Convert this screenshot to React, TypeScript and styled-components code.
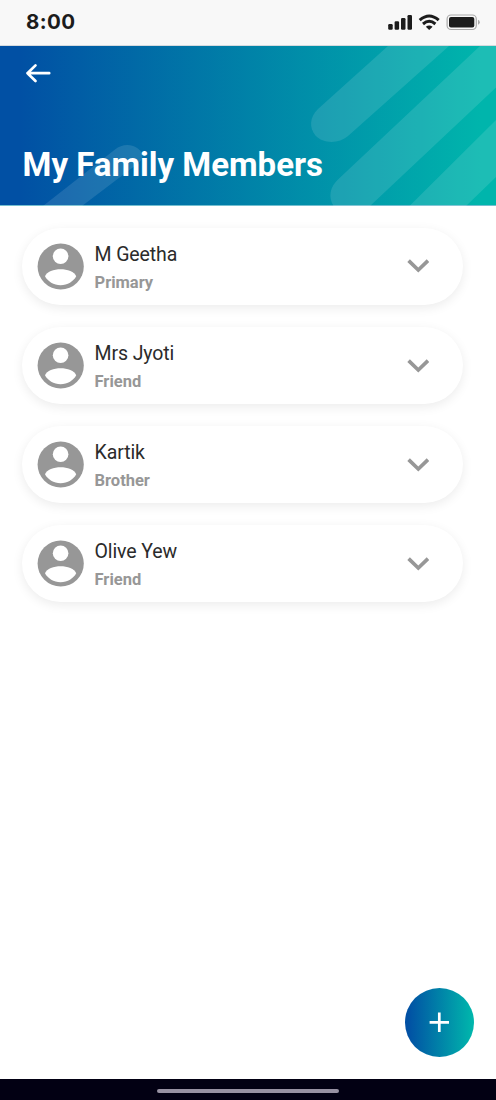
import React from "react";
import styled, { createGlobalStyle } from "styled-components";

const GlobalStyle = createGlobalStyle`
  * { box-sizing: border-box; }
  html, body { margin: 0; padding: 0; background: #fff; }
`;

const brandGradient = "linear-gradient(90deg, #0150a4 0%, #0150a4 4%, #00b5ac 97%, #00b5ac 100%)";

const Screen = styled.div`
  width: 496px;
  height: 1100px;
  display: flex;
  flex-direction: column;
  background: #fff;
  font-family: Roboto, sans-serif;
  overflow: hidden;
`;

const StatusBar = styled.div`
  height: 46px;
  flex: none;
  display: flex;
  align-items: center;
  justify-content: space-between;
  padding: 0 15px 2px 26px;
  background: #f8f8f8;
  border-bottom: 1px solid #d5dade;
`;

const Time = styled.span`
  font: 650 20.5px/24px Inter, sans-serif;
  letter-spacing: 0.45px;
  color: #1c1c1c;
`;

const StatusIcons = styled.svg`
  display: block;
  width: 94px;
  height: 18px;
`;

const Header = styled.header`
  position: relative;
  flex: none;
  height: 160px;
  display: flex;
  flex-direction: column;
  justify-content: space-between;
  padding: 17px 22px 20.5px 22.5px;
  background: ${brandGradient};
  border-bottom: 1px solid #74bfd0;
`;

const Stripes = styled.svg`
  position: absolute;
  inset: 0;
`;

const BackButton = styled.button`
  position: relative;
  width: 32px;
  height: 22px;
  padding: 0 0 0 2.500px;
  border: 0;
  background: none;
  svg { display: block; }
`;

const Title = styled.h1`
  position: relative;
  margin: 0;
  font-size: 33px;
  line-height: 40px;
  font-weight: 700;
  color: #fff;
  white-space: nowrap;
`;

const List = styled.main`
  flex: 1;
  display: flex;
  flex-direction: column;
  gap: 22.2px;
  padding: 21.9px 33px 0 22px;
`;

const Card = styled.article`
  height: 77px;
  flex: none;
  display: flex;
  align-items: center;
  padding: 0 34px 0 15px;
  border-radius: 39px;
  background: #fff;
  box-shadow: 0 3px 11px rgba(0, 0, 0, 0.08);
`;

const Details = styled.div`
  flex: 1;
  padding: 4px 0 0 10.5px;
`;

const Name = styled.div`
  font-size: 19.5px;
  line-height: 26px;
  letter-spacing: -0.1px;
  color: #2b2b2b;
`;

const Relation = styled.div`
  margin-top: 3px;
  font-size: 16.5px;
  line-height: 24px;
  font-weight: 700;
  color: #979797;
`;

const ActionRow = styled.div`
  display: flex;
  justify-content: flex-end;
  padding: 0 22px 22px 0;
`;

const AddButton = styled.button`
  width: 69px;
  height: 69px;
  display: grid;
  place-items: center;
  padding: 0;
  border: 0;
  border-radius: 50%;
  background: ${brandGradient};
`;

const HomeBar = styled.footer`
  height: 21px;
  flex: none;
  display: flex;
  justify-content: center;
  align-items: center;
  padding-top: 2px;
  background: #020013;
`;

const HomeIndicator = styled.div`
  width: 182px;
  height: 4px;
  border-radius: 2px;
  background: #9791a2;
`;

const Avatar = () => (
  <svg width="47" height="47" viewBox="0 0 47 47">
    <circle cx="23.7" cy="23.5" r="23.1" fill="#979797" />
    <circle cx="23.6" cy="13.2" r="7.8" fill="#fff" />
    <path d="M8 33.3C9.500 28.500 17 26.200 23.600 26.200S37.700 28.500 39.200 33.300C36.500 38.500 30.500 42.200 23.600 42.200S10.700 38.500 8 33.300Z" fill="#fff" />
  </svg>
);

const Chevron = () => (
  <svg width="22" height="14" viewBox="0 0 22 14">
    <path d="M1.600 1.600 11.300 11 21 1.600" fill="none" stroke="#979797" strokeWidth="3.700" />
  </svg>
);

const members = [
  { name: "M Geetha", relation: "Primary" },
  { name: "Mrs Jyoti", relation: "Friend" },
  { name: "Kartik", relation: "Brother" },
  { name: "Olive Yew", relation: "Friend" },
];

export default function App() {
  return (
    <Screen>
      <GlobalStyle />
      <StatusBar>
        <Time>8:00</Time>
        <StatusIcons viewBox="387 13 94 18">
          <g fill="#1c1c1c">
            <rect x="388.200" y="24" width="4.500" height="5.800" rx="1.200" />
            <rect x="394.600" y="21.300" width="4.500" height="8.500" rx="1.200" />
            <rect x="401" y="18" width="4.500" height="11.800" rx="1.200" />
            <rect x="407.500" y="15" width="4.500" height="14.800" rx="1.200" />
            <rect x="449" y="17" width="25.300" height="10.500" rx="2" />
            <path d="M425.800 26.800Q429.200 24.200 432.600 26.800L429.200 30Z" />
          </g>
          <g fill="none" stroke="#1c1c1c" strokeWidth="3">
            <path d="M419.700 20.200Q429.200 11.800 438.700 20.200" />
            <path d="M423 24Q429.200 18.600 435.400 24" />
          </g>
          <rect x="447.100" y="15" width="29.200" height="14.500" rx="4" fill="none" stroke="#a9a9a9" strokeWidth="1.200" />
          <path d="M478 19.800Q479.800 20.500 479.800 22.300T478 24.800Z" fill="#a9a9a9" />
        </StatusIcons>
      </StatusBar>
      <Header>
        <Stripes width="496" height="160" viewBox="0 46 496 160">
          <g fill="#fff" fillOpacity="0.115">
            <path d="M388 46 318 109C309.500 117 309 128 315.500 135.500C323 144 339 144 348 136L449 46Z" />
            <path d="M480 46 338 179.500C330 187 328 197 333.500 206H370L496 87.500V46Z" />
            <path d="M496 120 409.500 206H466L496 177Z" />
            <path d="M43 206 115 149.500C122 143.500 132 143.500 138.500 149C145 154.500 143 160 136 165L82 206Z" />
          </g>
        </Stripes>
        <BackButton aria-label="Back">
          <svg width="28" height="22" viewBox="0 0 28 22" fill="none" stroke="#fff" strokeWidth="2.700" strokeLinecap="round" strokeLinejoin="round">
            <path d="M24.200 10.200H2.500M10.500 2.400 2.500 10.200 10.500 18" />
          </svg>
        </BackButton>
        <Title>My Family Members</Title>
      </Header>
      <List>
        {members.map((member) => (
          <Card key={member.name}>
            <Avatar />
            <Details>
              <Name>{member.name}</Name>
              <Relation>{member.relation}</Relation>
            </Details>
            <Chevron />
          </Card>
        ))}
      </List>
      <ActionRow>
        <AddButton aria-label="Add member">
          <svg width="21" height="21" viewBox="0 0 21 21" stroke="#fff" strokeWidth="2.700">
            <path d="M10.300 0.600V20M0.600 10.300H20" />
          </svg>
        </AddButton>
      </ActionRow>
      <HomeBar>
        <HomeIndicator />
      </HomeBar>
    </Screen>
  );
}
